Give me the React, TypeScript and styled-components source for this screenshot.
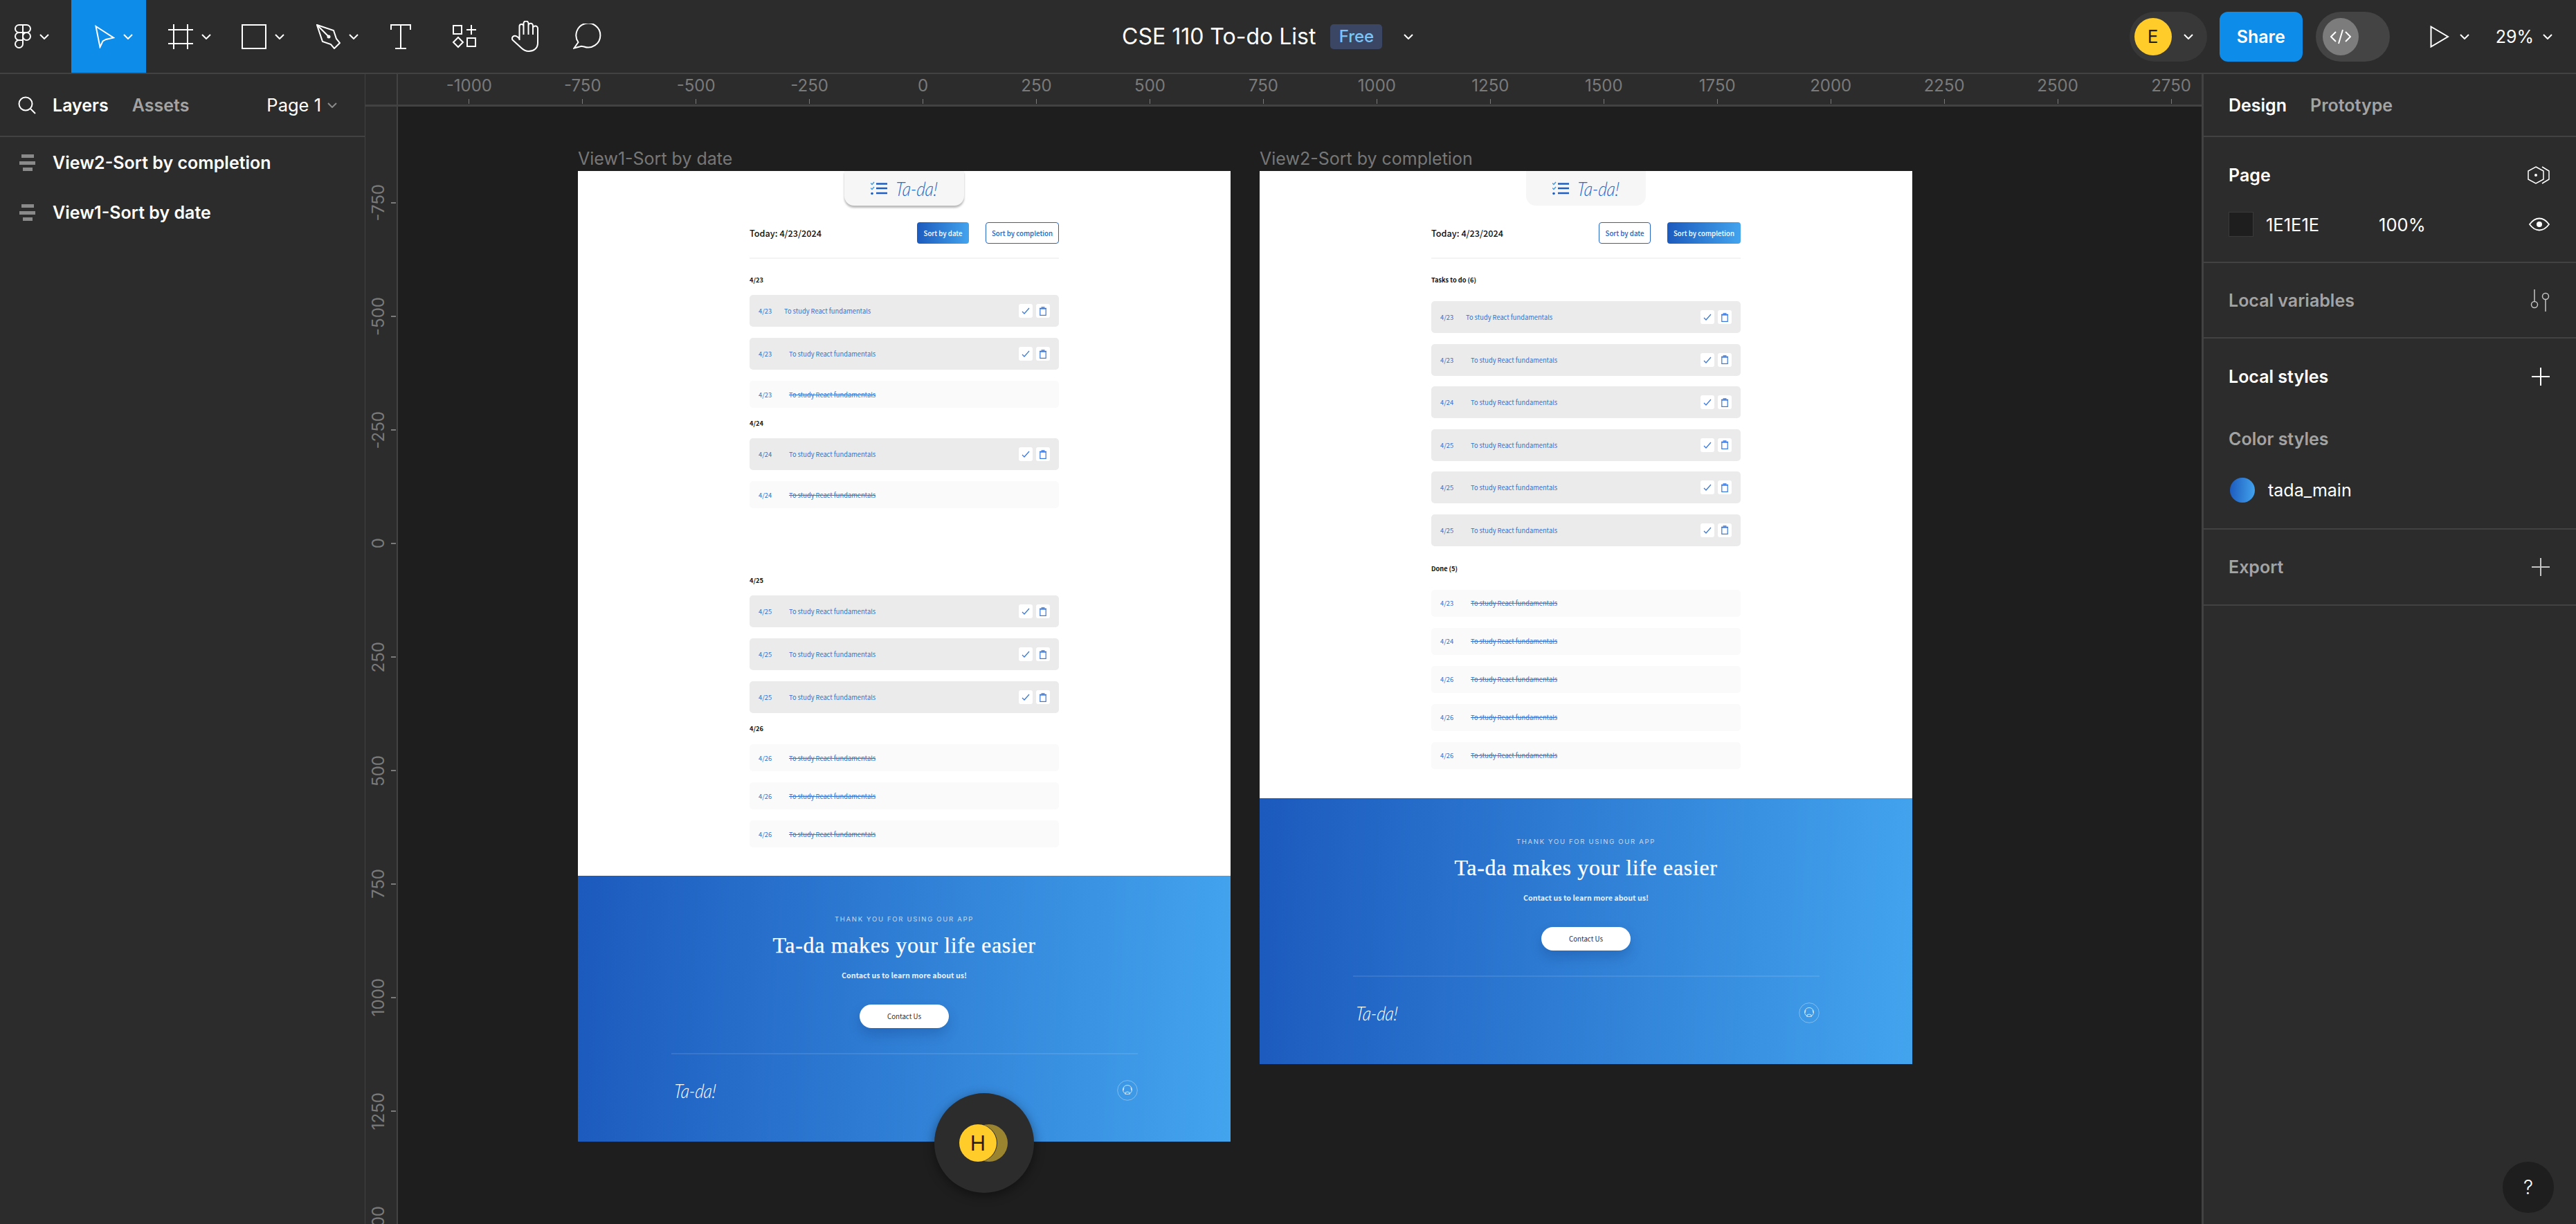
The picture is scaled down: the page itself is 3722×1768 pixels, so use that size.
import React from 'react';
import styled, { createGlobalStyle } from 'styled-components';

const GlobalStyles = createGlobalStyle`
  html, body { margin: 0; padding: 0; background: #1e1e1e; }
  * { box-sizing: border-box; }
`

const UI = `"Inter", "Liberation Sans", sans-serif`
const DOC = `"Noto Sans CJK SC", "Noto Sans", sans-serif`
const BLUE = 'linear-gradient(93deg, #1c5abd 0%, #43a4ee 100%)'
const LINE = '#424242'

const Container = styled.div`
  display: flex;
  flex-direction: column;
  width: 3722px;
  height: 1768px;
  overflow: hidden;
  background: #2c2c2c;
  font-family: ${UI};
  color: #fff;
`

/* top bar */
const TopBar = styled.header`
  display: flex;
  align-items: center;
  flex: none;
  height: 107px;
  border-bottom: 2px solid ${LINE};
`
const Tool = styled.div<{ $w: number; $pad: number; $active?: boolean }>`
  display: flex;
  align-items: center;
  gap: 12px;
  flex: none;
  width: ${p => p.$w}px;
  height: 105px;
  padding-left: ${p => p.$pad}px;
  background: ${p => (p.$active ? '#0d8ce9' : 'transparent')};
`
const Title = styled.div`
  display: flex;
  align-items: center;
  margin-left: 724px;
  font-size: 32px;
`
const FreeBadge = styled.span`
  display: flex;
  align-items: center;
  justify-content: center;
  width: 75px;
  height: 36px;
  margin: 0 31px 0 21px;
  border-radius: 5px;
  background: #3a4663;
  color: #7cc4f8;
  font-size: 24px;
  font-weight: 500;
`
const RightTools = styled.div`
  display: flex;
  align-items: center;
  margin-left: auto;
  padding-right: 34px;
`
const UserPill = styled.div`
  display: flex;
  align-items: center;
  gap: 17px;
  width: 112px;
  height: 72px;
  padding-left: 7px;
  border-radius: 36px;
  background: #383838;
`
const Avatar = styled.div`
  display: flex;
  align-items: center;
  justify-content: center;
  flex: none;
  width: 54px;
  height: 54px;
  border-radius: 50%;
  background: #ffcc29;
  color: #1e1e1e;
  font-size: 26px;
`
const ShareButton = styled.div`
  display: flex;
  align-items: center;
  justify-content: center;
  width: 120px;
  height: 72px;
  margin-left: 18px;
  border-radius: 12px;
  background: #0d8ce9;
  font-size: 25px;
  font-weight: 600;
`
const CodeToggle = styled.div`
  display: flex;
  align-items: center;
  width: 107px;
  height: 72px;
  margin-left: 19px;
  padding-left: 10px;
  border-radius: 36px;
  background: #444;
`
const CodeKnob = styled.div`
  display: flex;
  align-items: center;
  justify-content: center;
  width: 52px;
  height: 54px;
  border-radius: 50%;
  background: #7c7c7c;
`
const PlayGroup = styled.div`
  display: flex;
  align-items: center;
  gap: 15px;
  margin-left: 58px;
`
const ZoomGroup = styled.div`
  display: flex;
  align-items: center;
  gap: 13px;
  margin-left: 38px;
  font-size: 25px;
`

/* body */
const Body = styled.div`
  display: flex;
  flex: 1;
  min-height: 0;
`
const LeftPanel = styled.aside`
  flex: none;
  width: 528px;
  border-right: 1px solid ${LINE};
`
const PanelTabs = styled.div`
  display: flex;
  align-items: center;
  height: 91px;
  padding: 0 40px 0 26px;
  border-bottom: 2px solid ${LINE};
`
const TabLabel = styled.span<{ $muted?: boolean; $left: number }>`
  margin-left: ${p => p.$left}px;
  font-size: 25px;
  font-weight: 600;
  color: ${p => (p.$muted ? '#a3a3a3' : '#fff')};
`
const PageName = styled.span`
  margin-left: auto;
  margin-right: 9px;
  font-size: 25.5px;
`
const LayerList = styled.div`
  display: flex;
  flex-direction: column;
  gap: 32px;
  padding-top: 17px;
`
const LayerRow = styled.div`
  display: flex;
  align-items: center;
  gap: 25px;
  height: 40px;
  padding-left: 28px;
  font-size: 25px;
  font-weight: 600;
`

const Center = styled.main`
  display: flex;
  flex: 1;
  flex-direction: column;
  min-width: 0;
`
const TopRulerRow = styled.div`
  display: flex;
  flex: none;
  height: 47px;
  border-bottom: 3px solid ${LINE};
`
const RulerCorner = styled.div`
  flex: none;
  width: 47px;
  border-right: 2px solid ${LINE};
`
const HRuler = styled.div`
  position: relative;
  flex: 1;
`
const HMark = styled.div`
  position: absolute;
  top: 0;
  bottom: 0;
  width: 0;
  display: flex;
  flex-direction: column;
  align-items: center;
  color: #7a7a7a;
  font-size: 24px;
  line-height: 34px;
  &::after {
    content: '';
    position: absolute;
    top: 36px;
    bottom: 1px;
    width: 1px;
    background: #7a7a7a;
  }
`
const CanvasRow = styled.div`
  display: flex;
  flex: 1;
  min-height: 0;
`
const VRuler = styled.div`
  position: relative;
  flex: none;
  width: 47px;
  border-right: 2px solid ${LINE};
  overflow: hidden;
`
const VMark = styled.div`
  position: absolute;
  left: 0;
  right: 0;
  height: 0;
  display: flex;
  align-items: center;
  color: #7a7a7a;
  font-size: 24px;
  span {
    flex: none;
    width: 38px;
    text-align: center;
    writing-mode: vertical-rl;
    transform: rotate(180deg);
    line-height: 38px;
  }
  &::after {
    content: '';
    position: absolute;
    right: 1px;
    width: 7px;
    height: 2px;
    background: #7a7a7a;
  }
`
const Canvas = styled.div`
  position: relative;
  flex: 1;
  background: #1e1e1e;
  overflow: hidden;
`
const FramePlace = styled.section<{ $left: number }>`
  position: absolute;
  left: ${p => p.$left}px;
  top: 58px;
  width: 943px;
`
const FrameLabel = styled.div`
  height: 35px;
  color: #777;
  font-size: 25px;
  line-height: 34px;
`
const Frame = styled.div`
  display: flex;
  flex-direction: column;
  align-items: center;
  background: #fff;
  font-family: ${DOC};
`
const LogoTab = styled.div<{ $shadow?: boolean }>`
  display: flex;
  align-items: center;
  justify-content: center;
  gap: 12px;
  width: 173px;
  height: 50px;
  border-radius: 0 0 14px 14px;
  background: #f6f6f6;
  box-shadow: ${p => (p.$shadow ? '0 3px 3px rgba(0,0,0,.28)' : 'none')};
`
const Script = styled.span<{ $white?: boolean; $size: number }>`
  display: inline-block;
  font-family: "Lato", sans-serif;
  font-style: italic;
  font-weight: 300;
  font-size: ${p => p.$size}px;
  line-height: 1;
  color: ${p => (p.$white ? '#fff' : '#2468c8')};
  transform: scale(1, 1.18) skewX(-6deg);
`
const Inner = styled.div`
  width: 447px;
`
const DayHeader = styled.div`
  display: flex;
  align-items: center;
  height: 31px;
  margin-top: 24px;
`
const Today = styled.div`
  margin-right: auto;
  color: #111;
  font-size: 12.7px;
  font-weight: 500;
`
const SortButton = styled.div<{ $active?: boolean; $w: number }>`
  display: flex;
  align-items: center;
  justify-content: center;
  width: ${p => p.$w}px;
  height: 31px;
  margin-left: 24px;
  border-radius: 4px;
  border: ${p => (p.$active ? 'none' : '1.5px solid #2364c4')};
  background: ${p => (p.$active ? BLUE : '#fff')};
  color: ${p => (p.$active ? '#fff' : '#2364c4')};
  font-size: 9.7px;
  font-weight: 500;
`
const HeaderRule = styled.div`
  height: 2px;
  margin-top: 20px;
  background: #f3f3f3;
`
const Group = styled.div<{ $top: number; $gap: number; $after: number }>`
  margin-top: ${p => p.$top}px;
  & > div:first-child { margin-bottom: ${p => p.$after}px; }
  & > div + div + div { margin-top: ${p => p.$gap}px; }
`
const GroupTitle = styled.div`
  height: 16px;
  color: #111;
  font-size: 9.2px;
  font-weight: 700;
  line-height: 16px;
`
const TaskRow = styled.div<{ $done?: boolean }>`
  display: flex;
  align-items: center;
  height: ${p => (p.$done ? 39 : 46)}px;
  padding: 0 13px;
  border-radius: 5px;
  background: ${p => (p.$done ? '#fafafa' : '#ebebeb')};
  color: #3373cc;
  font-size: 9.3px;
`
const TaskDate = styled.span<{ $w: number }>`
  flex: none;
  width: ${p => p.$w}px;
`
const TaskText = styled.span<{ $done?: boolean }>`
  margin-right: auto;
  text-decoration: ${p => (p.$done ? 'line-through' : 'none')};
`
const RowButton = styled.div`
  display: flex;
  align-items: center;
  justify-content: center;
  width: 20px;
  height: 20px;
  margin-left: 5px;
  border-radius: 3px;
  background: #fff;
`
const BottomSpace = styled.div<{ $h: number }>`
  height: ${p => p.$h}px;
`
const FrameFooter = styled.footer`
  display: flex;
  flex-direction: column;
  align-items: center;
  align-self: stretch;
  height: 384px;
  padding-top: 56px;
  background: ${BLUE};
  color: #fff;
`
const Kicker = styled.div`
  height: 14px;
  color: rgba(255,255,255,.72);
  font-family: ${UI};
  font-size: 9.5px;
  letter-spacing: 1.7px;
  line-height: 14px;
`
const Headline = styled.div`
  height: 40px;
  margin-top: 10px;
  font-family: "Liberation Serif", serif;
  font-size: 32px;
  letter-spacing: 0.65px;
  line-height: 40px;
  -webkit-text-stroke: 0.25px #fff;
`
const Blurb = styled.div`
  height: 16px;
  margin-top: 16px;
  color: rgba(255,255,255,.9);
  font-size: 10.7px;
  font-weight: 700;
  line-height: 16px;
`
const ContactButton = styled.div`
  display: flex;
  align-items: center;
  justify-content: center;
  width: 129px;
  height: 34px;
  margin-top: 34px;
  border-radius: 17px;
  background: #fff;
  box-shadow: 0 9px 18px rgba(0,30,90,.2);
  color: #2a2d45;
  font-size: 9.7px;
`
const FooterRule = styled.div`
  width: 674px;
  height: 2px;
  margin-top: 36px;
  background: rgba(255,255,255,.1);
`
const FooterBottom = styled.div`
  display: flex;
  align-items: center;
  justify-content: space-between;
  width: 674px;
  height: 30px;
  margin-top: 37px;
  padding-left: 4px;
`
const Puck = styled.div`
  position: absolute;
  left: 775px;
  top: 1425px;
  display: flex;
  align-items: center;
  width: 144px;
  height: 144px;
  padding-left: 36px;
  border-radius: 50%;
  background: #2c2c2c;
  box-shadow: 0 4px 16px rgba(0,0,0,.45);
`
const PuckAvatar = styled(Avatar)`
  position: relative;
  z-index: 1;
  font-size: 30px;
  box-shadow: 1px 0 0 #2c2c2c;
`
const PuckShadow = styled.div`
  flex: none;
  width: 54px;
  height: 54px;
  margin-left: -38px;
  border-radius: 50%;
  background: #9b8430;
`

/* right panel */
const RightPanel = styled.aside`
  position: relative;
  flex: none;
  width: 541px;
  border-left: 3px solid ${LINE};
`
const Section = styled.div<{ $h: number; $center?: boolean }>`
  display: flex;
  flex-direction: column;
  justify-content: ${p => (p.$center ? 'center' : 'flex-start')};
  height: ${p => p.$h}px;
  padding: ${p => (p.$center ? '0' : '39px')} 38px 0 36px;
  border-bottom: 2px solid ${LINE};
`
const TabsRow = styled.div`
  display: flex;
  align-items: center;
  gap: 34px;
  height: 91px;
  padding-left: 36px;
  border-bottom: 2px solid ${LINE};
  font-size: 25px;
  font-weight: 600;
`
const Muted = styled.span`
  color: #a3a3a3;
`
const PanelHead = styled.div<{ $muted?: boolean; $top?: number }>`
  display: flex;
  align-items: center;
  justify-content: space-between;
  height: 32px;
  margin-top: ${p => p.$top ?? 0}px;
  color: ${p => (p.$muted ? '#a3a3a3' : '#fff')};
  font-size: 25px;
  font-weight: 600;
`
const ColorRow = styled.div`
  display: flex;
  align-items: center;
  height: 36px;
  margin-top: 37px;
  font-size: 25.5px;
`
const Swatch = styled.div`
  flex: none;
  width: 36px;
  height: 36px;
  margin-right: 18px;
  border: 1px solid #3a3a3a;
  background: #1e1e1e;
`
const Opacity = styled.span`
  margin-left: 86px;
  margin-right: auto;
`
const StyleRow = styled.div`
  display: flex;
  align-items: center;
  gap: 19px;
  height: 36px;
  margin-top: 40px;
  padding-left: 2px;
  font-size: 25px;
`
const StyleDot = styled.div`
  width: 36px;
  height: 36px;
  border-radius: 50%;
  background: ${BLUE};
`
const HelpButton = styled.div`
  position: absolute;
  right: 32px;
  bottom: 16px;
  display: flex;
  align-items: center;
  justify-content: center;
  width: 74px;
  height: 74px;
  border-radius: 50%;
  background: #1e1e1e;
  font-size: 28px;
  font-weight: 300;
`

/* icons */
const Chevron = ({ color = '#fff' }: { color?: string }) => (
  <svg width="14" height="8" viewBox="0 0 14 8" fill="none" stroke={color} strokeWidth="2"><path d="M1 1l6 6 6-6" /></svg>
)
const Stroke = ({ w, h, sw = 2, children }: { w: number; h: number; sw?: number; children: React.ReactNode }) => (
  <svg width={w} height={h} viewBox={`0 0 ${w} ${h}`} fill="none" stroke="#fff" strokeWidth={sw} style={{ flex: 'none' }}>{children}</svg>
)
const FigmaIcon = () => (
  <Stroke w={24} h={36}>
    <path d="M12 1H6.5a5.5 5.5 0 0 0 0 11H12zM12 1h5.5a5.5 5.5 0 0 1 0 11H12zM12 12H6.5a5.5 5.5 0 0 0 0 11H12z" />
    <circle cx="17.5" cy="17.5" r="5.5" />
    <path d="M6.5 23H12v5.5a5.5 5.5 0 1 1-5.5-5.5z" />
  </Stroke>
)
const MoveIcon = () => <Stroke w={29} h={34}><path d="M1.5 2L27 18.5l-11 2.5-4.5 2.5L7.500 32z" /></Stroke>
const FrameIcon = () => <Stroke w={36} h={36}><path d="M0 8h36M0 28h36M8 0v36M28 0v36" /></Stroke>
const RectIcon = () => <Stroke w={36} h={36}><rect x="1" y="1" width="34" height="34" /></Stroke>
const PenIcon = () => (
  <Stroke w={35} h={36}>
    <path d="M1 1l24 8 4 12 5 6-8 8-5-6-12-4z" />
    <path d="M1 1l16 16" />
    <circle cx="18" cy="18" r="2.5" fill="#fff" stroke="none" />
  </Stroke>
)
const TextIcon = () => <Stroke w={30} h={36}><path d="M1 8V1h28v7M15 1v34M7 35h16" /></Stroke>
const ComponentsIcon = () => (
  <Stroke w={36} h={36}>
    <rect x="2" y="2" width="12" height="12" />
    <path d="M21 8h14M28 1v14M9 19l7 7-7 7-7-7z" />
    <rect x="22" y="20" width="12" height="12" />
  </Stroke>
)
const HandIcon = () => (
  <Stroke w={40} h={46}>
    <path d="M11.5 28V8a3 3 0 0 1 6 0v12M17.5 8V4a3.5 3.5 0 0 1 7 0v16M24.5 7a3 3 0 0 1 6.5 0v13M31 11a3.5 3.5 0 0 1 7 0v21c0 8-6 12-13 12-5 0-8-2-11-5L2 28c-2-2-1-5 1.5-6 2.5-1 5.5 1 8 4" />
  </Stroke>
)
const CommentIcon = () => <Stroke w={42} h={37}><path d="M1.5 35.5L7.500 27A17.5 17.5 0 1 1 16 33.5l-4-.7z" /></Stroke>
const PlayIcon = () => <Stroke w={28} h={32}><path d="M1.5 1.5L26 16 1.5 30.5z" /></Stroke>
const CodeIcon = () => <Stroke w={30} h={22}><path d="M8 4l-7 7 7 7M22 4l7 7-7 7M18 1l-6 20" /></Stroke>
const SearchIcon = () => <Stroke w={26} h={26}><circle cx="11" cy="11" r="9.5" /><path d="M18 18l7 7" /></Stroke>
const LayerIcon = () => (
  <svg width="23" height="24" viewBox="0 0 23 24" fill="#8a8a8a" style={{ flex: 'none' }}>
    <rect x="3" y="0" width="18" height="5" /><rect x="0" y="10" width="23" height="5" /><rect x="5" y="19" width="14" height="5" />
  </svg>
)
const LogoList = () => (
  <svg width="24" height="20" viewBox="0 0 24 20" fill="none" style={{ flex: 'none' }}>
    <path d="M0 2.5l2 2L5 1M0 9.5l2 2L5 8" stroke="#3f9be6" strokeWidth="1.5" />
    <circle cx="2" cy="17.5" r="1.8" fill="#1f5fc0" />
    <path d="M8 3.5h16M8 10h16M8 17h16" stroke="#1f5fc0" strokeWidth="2.5" />
  </svg>
)
const CheckIcon = () => (
  <svg width="12" height="10" viewBox="0 0 12 10" fill="none" stroke="#3878dc" strokeWidth="1.2"><path d="M1 6l3 3 7-8" /></svg>
)
const TrashIcon = () => (
  <svg width="10" height="13" viewBox="0 0 10 13" fill="none" stroke="#3878dc" strokeWidth="1.2"><rect x=".8" y="3" width="8.4" height="9.4" /><path d="M2.5 .8h5M0 2.4h10" /></svg>
)
const FooterBadge = () => (
  <svg width="30" height="30" viewBox="0 0 30 30" fill="none" stroke="#fff">
    <circle cx="15" cy="15" r="14.3" strokeOpacity=".35" />
    <circle cx="15" cy="14" r="6.5" strokeOpacity=".75" />
    <path d="M10 11l-1 4M20 11l1 4M12 21v-3l3-1 3 1v3" strokeOpacity=".75" />
  </svg>
)
const StylesIcon = () => (
  <Stroke w={32} h={26} sw={1.5}>
    <path d="M12 1l11 6v12l-11 6-11-6V7z" />
    <path d="M21 1l10 6v12l-10 6" />
    <circle cx="12" cy="13" r="2" fill="#fff" stroke="none" />
  </Stroke>
)
const EyeIcon = () => (
  <Stroke w={30} h={20} sw={1.8}>
    <path d="M1 10c4-5.5 9-8.5 14-8.5S25 4.5 29 10c-4 5.5-9 8.5-14 8.5S5 15.5 1 10z" />
    <circle cx="15" cy="10" r="4" fill="#fff" stroke="none" />
  </Stroke>
)
const VariablesIcon = () => (
  <Stroke w={28} h={32} sw={1.5}>
    <path d="M6 0v18M22 14v18" stroke="#c4c4c4" />
    <circle cx="6" cy="22" r="4.5" stroke="#c4c4c4" />
    <circle cx="22" cy="10" r="4.5" stroke="#c4c4c4" />
  </Stroke>
)
const PlusIcon = ({ color = '#fff' }: { color?: string }) => (
  <svg width="26" height="26" viewBox="0 0 26 26" fill="none" stroke={color} strokeWidth="2"><path d="M0 13h26M13 0v26" /></svg>
)

/* data */
type Task = { date: string; done?: boolean; gap?: number }
type TaskGroup = { title: string; top: number; after: number; gap: number; tasks: Task[] }

const dateView: TaskGroup[] = [
  { title: '4/23', top: 22, after: 14, gap: 16, tasks: [{ date: '4/23', gap: 37 }, { date: '4/23' }, { date: '4/23', done: true }] },
  { title: '4/24', top: 14, after: 14, gap: 16, tasks: [{ date: '4/24' }, { date: '4/24', done: true }] },
  { title: '4/25', top: 96, after: 14, gap: 16, tasks: [{ date: '4/25' }, { date: '4/25' }, { date: '4/25' }] },
  { title: '4/26', top: 14, after: 15, gap: 16, tasks: [{ date: '4/26', done: true }, { date: '4/26', done: true }, { date: '4/26', done: true }] },
]
const completionView: TaskGroup[] = [
  {
    title: 'Tasks to do (6)', top: 22, after: 23, gap: 15.6,
    tasks: [{ date: '4/23', gap: 37 }, { date: '4/23' }, { date: '4/24' }, { date: '4/25' }, { date: '4/25' }, { date: '4/25' }],
  },
  {
    title: 'Done (5)', top: 24, after: 23, gap: 16,
    tasks: ['4/23', '4/24', '4/26', '4/26', '4/26'].map(date => ({ date, done: true })),
  },
]
const hTicks = Array.from({ length: 16 }, (_, i) => -1000 + i * 250)
const vTicks = Array.from({ length: 10 }, (_, i) => -750 + i * 250)

const TaskItem = ({ date, done, gap = 44 }: Task) => (
  <TaskRow $done={done}>
    <TaskDate $w={gap}>{date}</TaskDate>
    <TaskText $done={done}>To study React fundamentals</TaskText>
    {!done && <RowButton><CheckIcon /></RowButton>}
    {!done && <RowButton><TrashIcon /></RowButton>}
  </TaskRow>
)

const Board = ({ left, label, byDate, groups, space }: { left: number; label: string; byDate?: boolean; groups: TaskGroup[]; space: number }) => (
  <FramePlace $left={left}>
    <FrameLabel>{label}</FrameLabel>
    <Frame>
      <LogoTab $shadow={byDate}>
        <LogoList />
        <Script $size={24}>Ta-da!</Script>
      </LogoTab>
      <Inner>
        <DayHeader>
          <Today>Today: 4/23/2024</Today>
          <SortButton $w={75} $active={byDate}>Sort by date</SortButton>
          <SortButton $w={106} $active={!byDate}>Sort by completion</SortButton>
        </DayHeader>
        <HeaderRule />
        {groups.map(g => (
          <Group key={g.title} $top={g.top} $gap={g.gap} $after={g.after}>
            <GroupTitle>{g.title}</GroupTitle>
            {g.tasks.map((t, i) => <TaskItem key={i} {...t} />)}
          </Group>
        ))}
      </Inner>
      <BottomSpace $h={space} />
      <FrameFooter>
        <Kicker>THANK YOU FOR USING OUR APP</Kicker>
        <Headline>Ta-da makes your life easier</Headline>
        <Blurb>Contact us to learn more about us!</Blurb>
        <ContactButton>Contact Us</ContactButton>
        <FooterRule />
        <FooterBottom>
          <Script $size={24} $white>Ta-da!</Script>
          <FooterBadge />
        </FooterBottom>
      </FrameFooter>
    </Frame>
  </FramePlace>
)

function App() {
  return (
    <>
      <GlobalStyles />
      <Container>
        <TopBar>
          <Tool $w={103} $pad={21}><FigmaIcon /><Chevron /></Tool>
          <Tool $w={108} $pad={34} $active><MoveIcon /><Chevron /></Tool>
          <Tool $w={107} $pad={32}><FrameIcon /><Chevron /></Tool>
          <Tool $w={107} $pad={31}><RectIcon /><Chevron /></Tool>
          <Tool $w={107} $pad={32}><PenIcon /><Chevron /></Tool>
          <Tool $w={93} $pad={32}><TextIcon /></Tool>
          <Tool $w={92} $pad={28}><ComponentsIcon /></Tool>
          <Tool $w={83} $pad={22}><HandIcon /></Tool>
          <Tool $w={97} $pad={28}><CommentIcon /></Tool>
          <Title>
            CSE 110 To-do List
            <FreeBadge>Free</FreeBadge>
            <Chevron />
          </Title>
          <RightTools>
            <UserPill><Avatar>E</Avatar><Chevron /></UserPill>
            <ShareButton>Share</ShareButton>
            <CodeToggle><CodeKnob><CodeIcon /></CodeKnob></CodeToggle>
            <PlayGroup><PlayIcon /><Chevron /></PlayGroup>
            <ZoomGroup>29%<Chevron /></ZoomGroup>
          </RightTools>
        </TopBar>
        <Body>
          <LeftPanel>
            <PanelTabs>
              <SearchIcon />
              <TabLabel $left={24}>Layers</TabLabel>
              <TabLabel $left={34} $muted>Assets</TabLabel>
              <PageName>Page 1</PageName>
              <Chevron color="#8a8a8a" />
            </PanelTabs>
            <LayerList>
              <LayerRow><LayerIcon />View2-Sort by completion</LayerRow>
              <LayerRow><LayerIcon />View1-Sort by date</LayerRow>
            </LayerList>
          </LeftPanel>
          <Center>
            <TopRulerRow>
              <RulerCorner />
              <HRuler>
                {hTicks.map(v => (
                  <HMark key={v} style={{ left: 805.6 + v * 0.6558 - 47 }}>{v}</HMark>
                ))}
              </HRuler>
            </TopRulerRow>
            <CanvasRow>
              <VRuler>
                {vTicks.map(v => (
                  <VMark key={v} style={{ top: 785 + v * 0.656 - 154 }}><span>{v}</span></VMark>
                ))}
              </VRuler>
              <Canvas>
                <Board left={260} label="View1-Sort by date" byDate groups={dateView} space={41} />
                <Board left={1245} label="View2-Sort by completion" groups={completionView} space={42} />
                <Puck>
                  <PuckAvatar>H</PuckAvatar>
                  <PuckShadow />
                </Puck>
              </Canvas>
            </CanvasRow>
          </Center>
          <RightPanel>
            <TabsRow>Design<Muted>Prototype</Muted></TabsRow>
            <Section $h={182}>
              <PanelHead>Page<StylesIcon /></PanelHead>
              <ColorRow>
                <Swatch />
                1E1E1E
                <Opacity>100%</Opacity>
                <EyeIcon />
              </ColorRow>
            </Section>
            <Section $h={109} $center>
              <PanelHead $muted>Local variables<VariablesIcon /></PanelHead>
            </Section>
            <Section $h={276}>
              <PanelHead>Local styles<PlusIcon /></PanelHead>
              <PanelHead $muted $top={58}>Color styles</PanelHead>
              <StyleRow><StyleDot />tada_main</StyleRow>
            </Section>
            <Section $h={110} $center>
              <PanelHead $muted>Export<PlusIcon color="#c4c4c4" /></PanelHead>
            </Section>
            <HelpButton>?</HelpButton>
          </RightPanel>
        </Body>
      </Container>
    </>
  );
}

export default App;
